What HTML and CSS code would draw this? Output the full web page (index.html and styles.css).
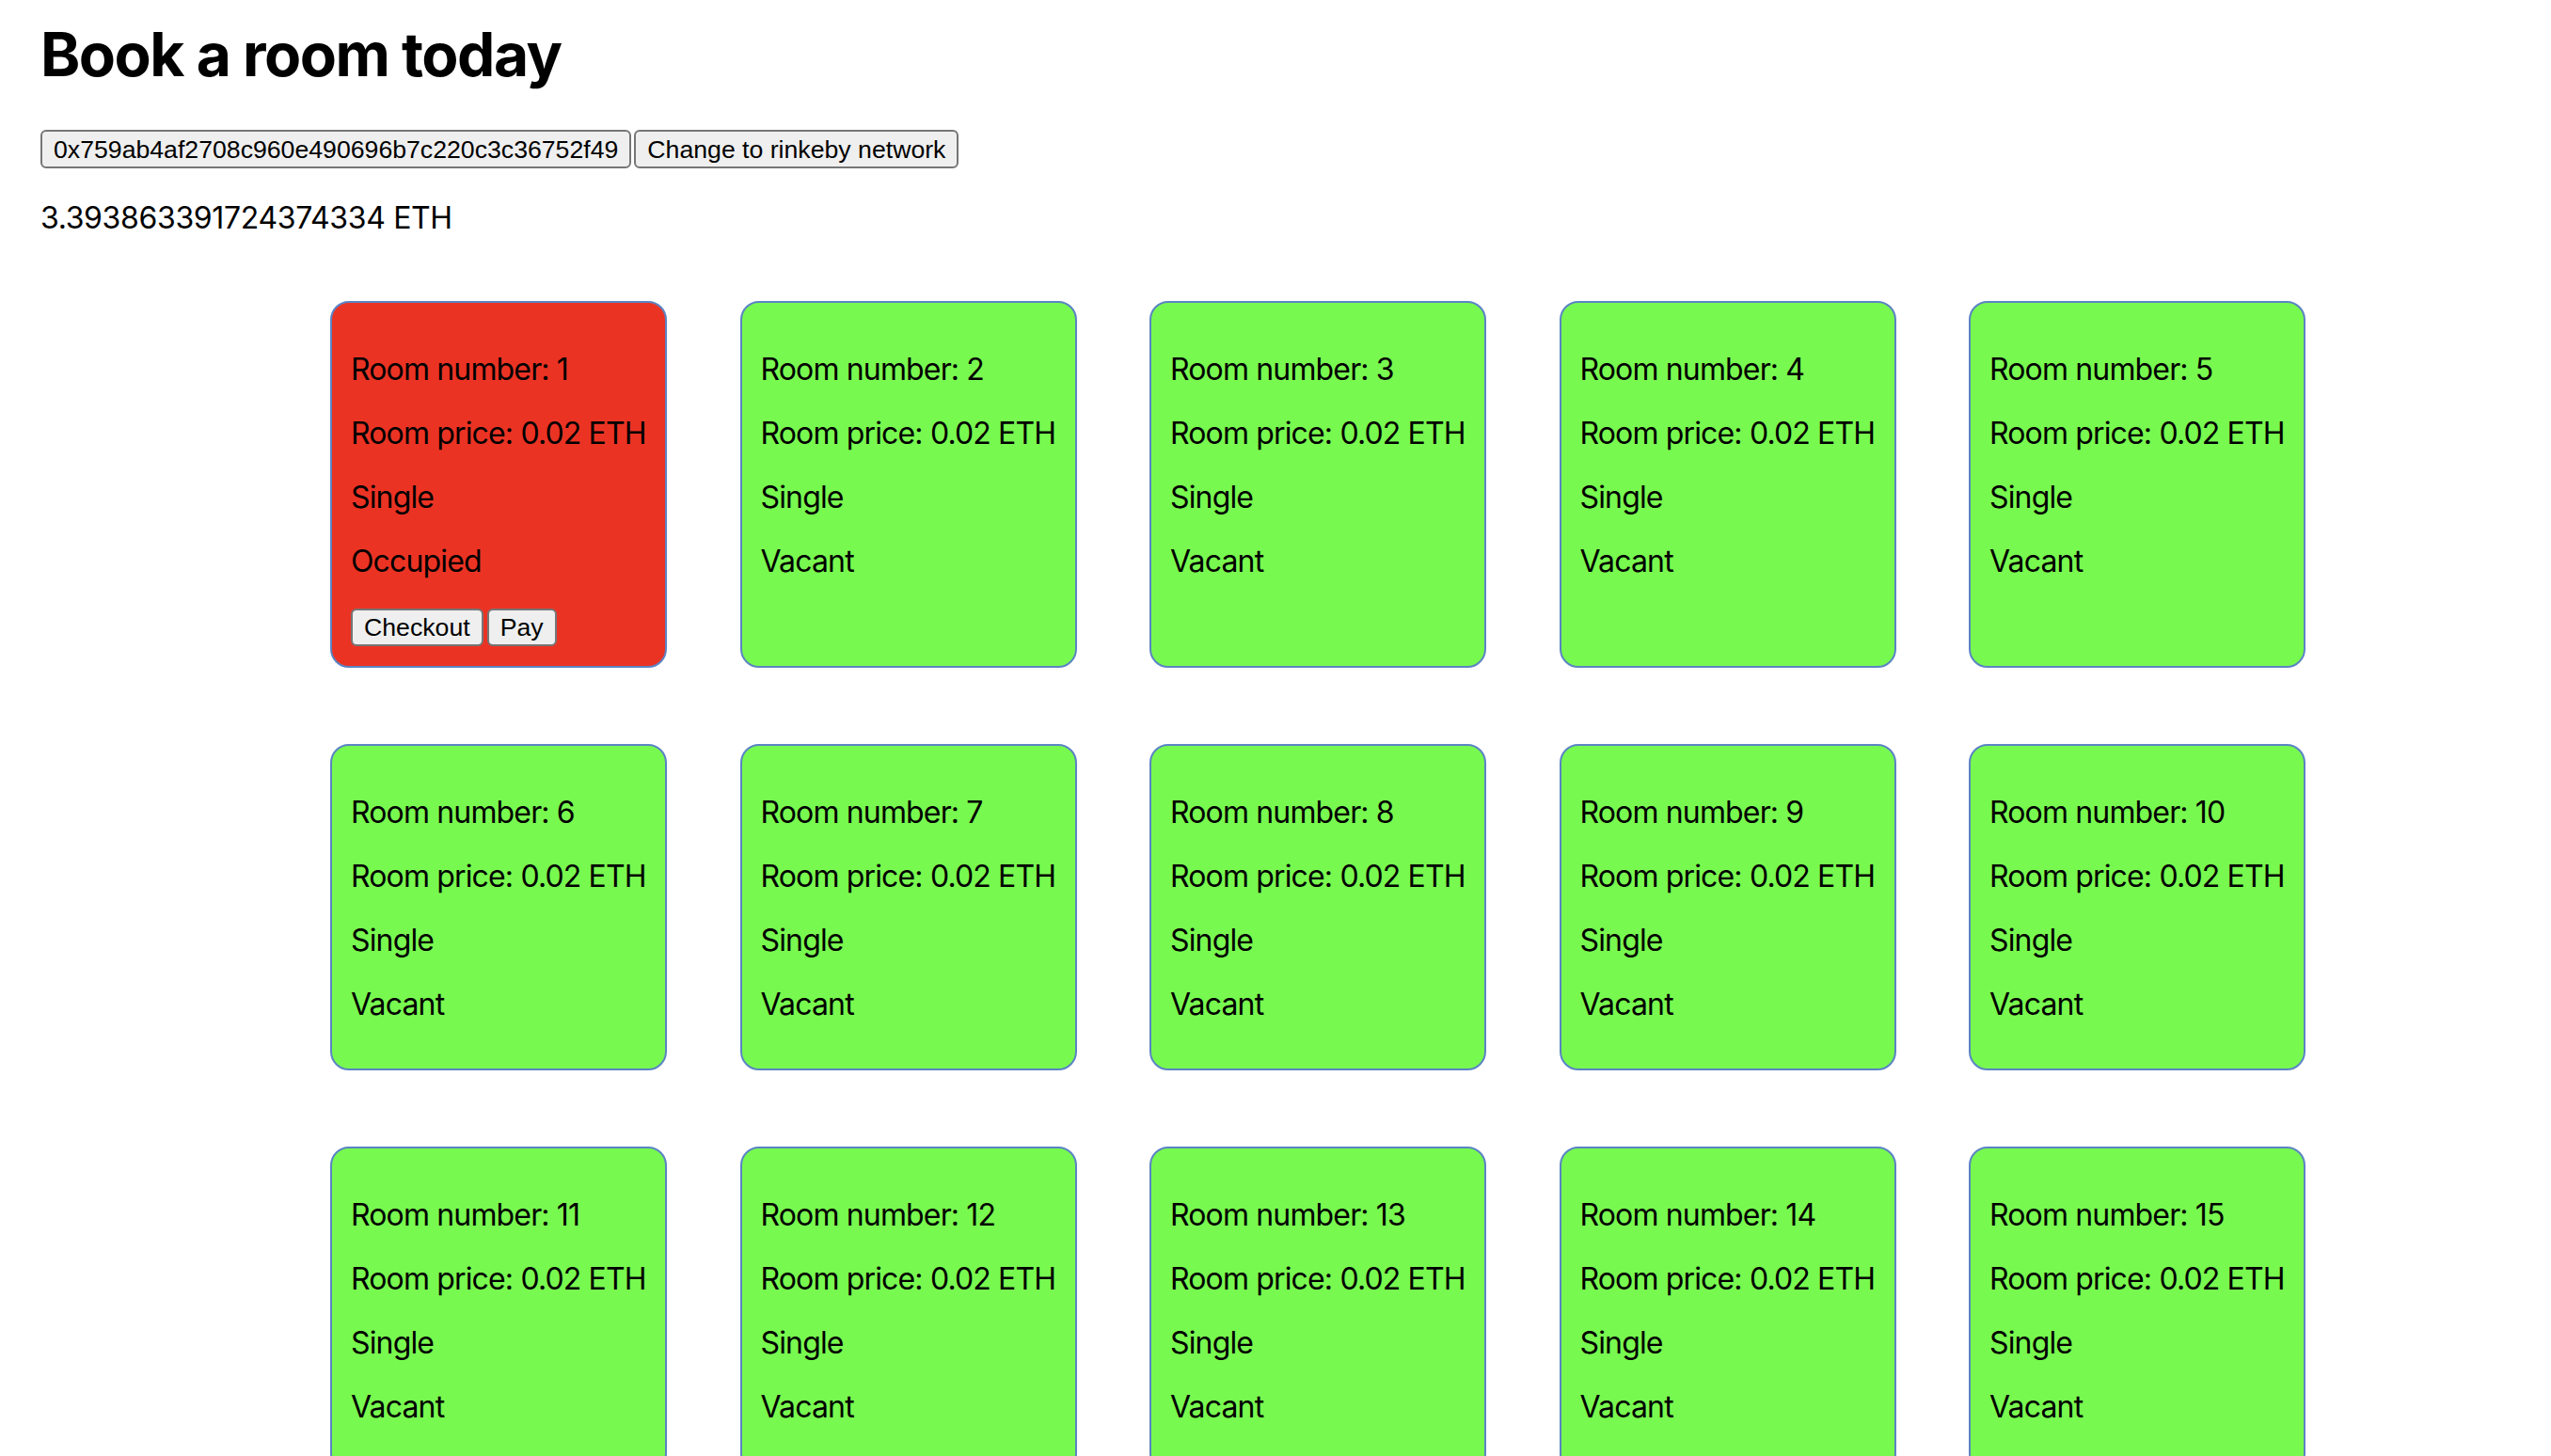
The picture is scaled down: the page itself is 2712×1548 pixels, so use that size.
FILE: index.html
```html
<!DOCTYPE html>
<html lang="en">
<head>
<meta charset="utf-8">
<title>Book a room today</title>
<link rel="stylesheet" href="styles.css">
</head>
<body>
<div class="app">
  <h1 class="title">Book a room today</h1>
  <div class="actions">
    <button class="btn btn-top">0x759ab4af2708c960e490696b7c220c3c36752f49</button>
    <button class="btn btn-top">Change to rinkeby network</button>
  </div>
  <p class="balance">3.393863391724374334 ETH</p>
  <div class="rooms">
    <div class="room occupied">
      <p>Room number: 1</p>
      <p>Room price: 0.02 ETH</p>
      <p>Single</p>
      <p>Occupied</p>
      <div class="room-actions">
        <button class="btn">Checkout</button>
        <button class="btn">Pay</button>
      </div>
    </div>
    <div class="room vacant"><p>Room number: 2</p><p>Room price: 0.02 ETH</p><p>Single</p><p>Vacant</p></div>
    <div class="room vacant"><p>Room number: 3</p><p>Room price: 0.02 ETH</p><p>Single</p><p>Vacant</p></div>
    <div class="room vacant"><p>Room number: 4</p><p>Room price: 0.02 ETH</p><p>Single</p><p>Vacant</p></div>
    <div class="room vacant"><p>Room number: 5</p><p>Room price: 0.02 ETH</p><p>Single</p><p>Vacant</p></div>
    <div class="room vacant"><p>Room number: 6</p><p>Room price: 0.02 ETH</p><p>Single</p><p>Vacant</p></div>
    <div class="room vacant"><p>Room number: 7</p><p>Room price: 0.02 ETH</p><p>Single</p><p>Vacant</p></div>
    <div class="room vacant"><p>Room number: 8</p><p>Room price: 0.02 ETH</p><p>Single</p><p>Vacant</p></div>
    <div class="room vacant"><p>Room number: 9</p><p>Room price: 0.02 ETH</p><p>Single</p><p>Vacant</p></div>
    <div class="room vacant"><p>Room number: 10</p><p>Room price: 0.02 ETH</p><p>Single</p><p>Vacant</p></div>
    <div class="room vacant"><p>Room number: 11</p><p>Room price: 0.02 ETH</p><p>Single</p><p>Vacant</p></div>
    <div class="room vacant"><p>Room number: 12</p><p>Room price: 0.02 ETH</p><p>Single</p><p>Vacant</p></div>
    <div class="room vacant"><p>Room number: 13</p><p>Room price: 0.02 ETH</p><p>Single</p><p>Vacant</p></div>
    <div class="room vacant"><p>Room number: 14</p><p>Room price: 0.02 ETH</p><p>Single</p><p>Vacant</p></div>
    <div class="room vacant"><p>Room number: 15</p><p>Room price: 0.02 ETH</p><p>Single</p><p>Vacant</p></div>
  </div>
</div>
</body>
</html>
```
FILE: styles.css
```css
html, body {
  margin: 0;
  padding: 0;
  background: #ffffff;
}

body {
  font-family: Inter, "Liberation Sans", sans-serif;
  font-size: 32px;
  color: #000000;
}

.app {
  padding: 20px 0 0 43px;
}

.title {
  margin: 0;
  font-size: 64px;
  line-height: 76px;
  font-weight: 700;
  letter-spacing: -1.5px;
}

.actions {
  display: flex;
  gap: 3px;
  margin-top: 42px;
}

.btn {
  font-family: "Liberation Sans", Arial, sans-serif;
  font-size: 26.67px;
  line-height: 30px;
  height: 40px;
  padding: 0 12px;
  margin: 0;
  border: 2px solid #767676;
  border-radius: 6px;
  background: #efefef;
  color: #000000;
  letter-spacing: 0;
}

.btn-top {
  height: 41px;
}

.balance {
  margin: 35px 0 0 0;
  line-height: 36px;
  letter-spacing: -0.35px;
}

.rooms {
  display: grid;
  grid-template-columns: repeat(5, 358px);
  column-gap: 77.5px;
  row-gap: 81px;
  margin: 70px 0 0 308px;
}

.room {
  border: 2px solid #5b84c4;
  border-radius: 20px;
  padding: 21px 20px 18px;
}

.room p {
  margin: 32px 0;
  line-height: 36px;
  letter-spacing: -0.85px;
  white-space: nowrap;
}

.occupied {
  background: #eb3324;
}

.vacant {
  background: #78f94f;
}

.room-actions {
  display: flex;
  gap: 4px;
  height: 43px;
}
```
